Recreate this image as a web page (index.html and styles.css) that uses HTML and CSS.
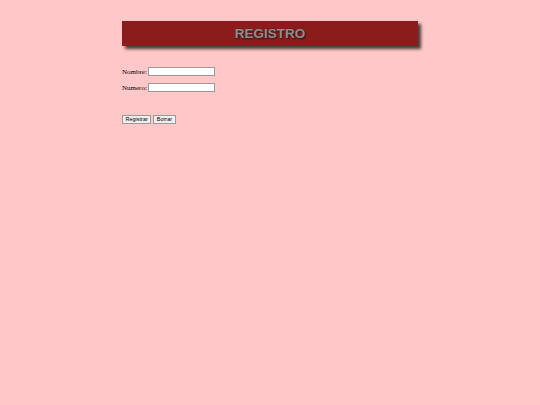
FILE: index.html
```html
<!DOCTYPE html>
<html>
<head>
<meta charset="utf-8">
<link rel="stylesheet" href="styles.css">
</head>
<body>
<div class="page">
  <div class="header"><h1 class="title">REGISTRO</h1></div>
  <form class="form">
    <div class="row"><label class="label">Nombre:</label><input class="field" type="text"></div>
    <div class="row"><label class="label">Numero:</label><input class="field" type="text"></div>
    <div class="buttons">
      <button class="btn" type="button">Registrar</button>
      <button class="btn" type="button">Borrar</button>
    </div>
  </form>
</div>
</body>
</html>
```
FILE: styles.css
```css
html, body {
  margin: 0;
  padding: 0;
  background: #ffc8c8;
  width: 540px;
  height: 405px;
  overflow: hidden;
}
.page {
  padding: 21px 0 0 122px;
  font-family: "Liberation Serif", serif;
}
.header {
  width: 296px;
  height: 25px;
  background: #8b1c1c;
  box-shadow: 3px 3px 3px #4a3a3a;
  display: flex;
  align-items: center;
  justify-content: center;
}
.title {
  margin: 0;
  font-family: "Liberation Sans", Arial, sans-serif;
  font-weight: bold;
  font-size: 13.5px;
  color: #8c8c8c;
  text-shadow: 1px 1px 2px #2a1010;
}
.form {
  margin: 21px 0 0 0;
  display: flex;
  flex-direction: column;
  gap: 7px;
}
.row {
  display: flex;
  align-items: center;
  gap: 1px;
  height: 9px;
}
.label {
  font-size: 7px;
  color: #000;
  width: 25px;
}
.field {
  box-sizing: border-box;
  width: 67px;
  height: 9px;
  margin: 0;
  padding: 0;
  border: 1px solid #999;
  background: #fff;
}
.buttons {
  margin-top: 16px;
  display: flex;
  gap: 2px;
}
.btn {
  box-sizing: border-box;
  height: 9px;
  margin: 0;
  padding: 0 2.5px;
  font-family: "Liberation Sans", Arial, sans-serif;
  font-size: 5.5px;
  line-height: 7px;
  border: 1px solid #999;
  background: #efefef;
  color: #000;
}
```
